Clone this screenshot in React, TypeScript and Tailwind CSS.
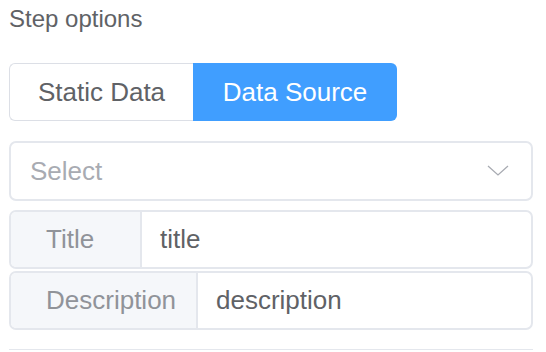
import React from "react";

export default function App() {
  const font = { fontFamily: '"Liberation Sans", Arial, sans-serif' };
  return (
    <div className="w-[546px] h-[352px] bg-white overflow-hidden" style={font}>
      <div className="pl-[9px] pr-[13px]">
        <div className="pt-[5px] text-[24px] leading-[28px] text-[#606266]">Step options</div>
        <div className="mt-[30px] flex h-[58px]">
          <div className="flex items-center whitespace-nowrap border border-[#dcdfe6] border-r-0 rounded-l-[6px] text-[26px] text-[#606266] w-[184px] justify-center">
            Static Data
          </div>
          <div className="flex items-center whitespace-nowrap bg-[#409eff] rounded-r-[6px] text-[26px] text-white w-[204px] justify-center">
            Data Source
          </div>
        </div>
        <div className="mt-[20px] h-[60px] border-2 border-[#e4e7ed] rounded-[7px] flex items-center pl-[19px] pr-[22px]">
          <span className="flex-1 text-[26px] text-[#a8abb2]">Select</span>
          <svg width="22" height="12" viewBox="0 0 22 12" fill="none">
            <path d="M1 1 L11 10 L21 1" stroke="#a8abb2" strokeWidth="1.3" />
          </svg>
        </div>
        <div className="mt-[9px] h-[59px] border-2 border-[#e4e7ed] rounded-[7px] flex overflow-hidden">
          <div className="w-[131px] bg-[#f5f7fa] border-r-2 border-[#e4e7ed] flex items-center pl-[35px] text-[26px] text-[#909399]">
            Title
          </div>
          <div className="flex-1 flex items-center pl-[18px] text-[26px] text-[#606266]">title</div>
        </div>
        <div className="mt-[2px] h-[59px] border-2 border-[#e4e7ed] rounded-[7px] flex overflow-hidden">
          <div className="w-[187px] bg-[#f5f7fa] border-r-2 border-[#e4e7ed] flex items-center pl-[35px] text-[26px] text-[#909399]">
            Description
          </div>
          <div className="flex-1 flex items-center pl-[18px] text-[26px] text-[#606266]">description</div>
        </div>
        <div className="mt-[19px] h-[1px] bg-[#e4e7ed]" />
      </div>
    </div>
  );
}
